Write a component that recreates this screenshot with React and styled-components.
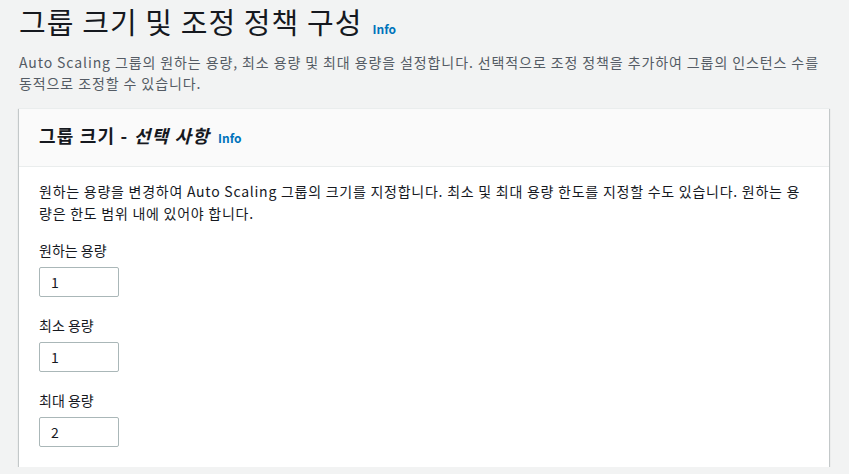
import React from 'react';
import styled, { createGlobalStyle } from 'styled-components';

const GlobalStyle = createGlobalStyle`
  html, body {
    margin: 0;
    padding: 0;
    background: #f2f3f3;
  }
  body {
    font-family: 'Noto Sans CJK KR', 'Noto Sans', sans-serif;
    color: #16191f;
    font-size: 14px;
  }
`;

const Page = styled.main`
  padding: 0 20px 0 19px;
  width: 849px;
  box-sizing: border-box;
`;

const Title = styled.h1`
  margin: 0;
  font-size: 29px;
  font-weight: 400;
  line-height: 42px;
  letter-spacing: 1.1px;
  color: #16191f;
  display: flex;
  align-items: baseline;
`;

const InfoLink = styled.a`
  font-size: 12px;
  font-weight: 700;
  letter-spacing: 0;
  color: #0073bb;
  text-decoration: none;
  margin-left: ${(p) => p.gap || 10}px;
  line-height: 1;
`;

const Description = styled.p`
  margin: 10px 0 0;
  font-size: 14px;
  line-height: 21px;
  letter-spacing: 0.9px;
  color: #545b64;
`;

const Panel = styled.section`
  margin-top: 14px;
  background: #fff;
  border-top: 1px solid #eaeded;
  box-shadow: 0 1px 1px 0 rgba(0, 28, 36, 0.3), 1px 1px 1px 0 rgba(0, 28, 36, 0.15),
    -1px 1px 1px 0 rgba(0, 28, 36, 0.15);
`;

const PanelHeader = styled.header`
  background: #fafafa;
  border-bottom: 1px solid #eaeded;
  padding: 13px 20px 18px;
  display: flex;
  align-items: baseline;
`;

const PanelTitle = styled.h2`
  margin: 0;
  font-size: 18px;
  font-weight: 700;
  line-height: 26px;
  letter-spacing: 1.2px;
  color: #16191f;

  em {
    font-style: italic;
  }
`;

const PanelBody = styled.div`
  padding: 13px 20px 20px;
`;

const BodyText = styled.p`
  margin: 0;
  line-height: 22px;
  letter-spacing: 0.75px;
`;

const FieldList = styled.div`
  margin-top: 15px;
  display: flex;
  flex-direction: column;
  gap: 17px;
`;

const Field = styled.label`
  display: flex;
  flex-direction: column;
  gap: 6px;
`;

const FieldLabel = styled.span`
  line-height: 22px;
  color: #16191f;
`;

const NumberInput = styled.input`
  box-sizing: border-box;
  width: 80px;
  height: 30px;
  padding: 0 11px;
  border: 1px solid #aab7b8;
  border-radius: 2px;
  font-family: inherit;
  font-size: 14px;
  color: #16191f;
  background: #fff;
  outline: none;
`;

const fields = [
  { label: '원하는 용량', value: '1' },
  { label: '최소 용량', value: '1' },
  { label: '최대 용량', value: '2' },
];

const App = () => (
  <>
    <GlobalStyle />
    <Page>
      <Title>
        그룹 크기 및 조정 정책 구성
        <InfoLink href='#'>Info</InfoLink>
      </Title>
      <Description>
        Auto Scaling 그룹의 원하는 용량, 최소 용량 및 최대 용량을 설정합니다. 선택적으로 조정 정책을
        추가하여 그룹의 인스턴스 수를 동적으로 조정할 수 있습니다.
      </Description>
      <Panel>
        <PanelHeader>
          <PanelTitle>
            그룹 크기 - <em>선택 사항</em>
          </PanelTitle>
          <InfoLink href='#' gap={8}>
            Info
          </InfoLink>
        </PanelHeader>
        <PanelBody>
          <BodyText>
            원하는 용량을 변경하여 Auto Scaling 그룹의 크기를 지정합니다. 최소 및 최대 용량 한도를 지정할
            수도 있습니다. 원하는 용량은 한도 범위 내에 있어야 합니다.
          </BodyText>
          <FieldList>
            {fields.map((f) => (
              <Field key={f.label}>
                <FieldLabel>{f.label}</FieldLabel>
                <NumberInput type='text' defaultValue={f.value} />
              </Field>
            ))}
          </FieldList>
        </PanelBody>
      </Panel>
    </Page>
  </>
);

export default App;
